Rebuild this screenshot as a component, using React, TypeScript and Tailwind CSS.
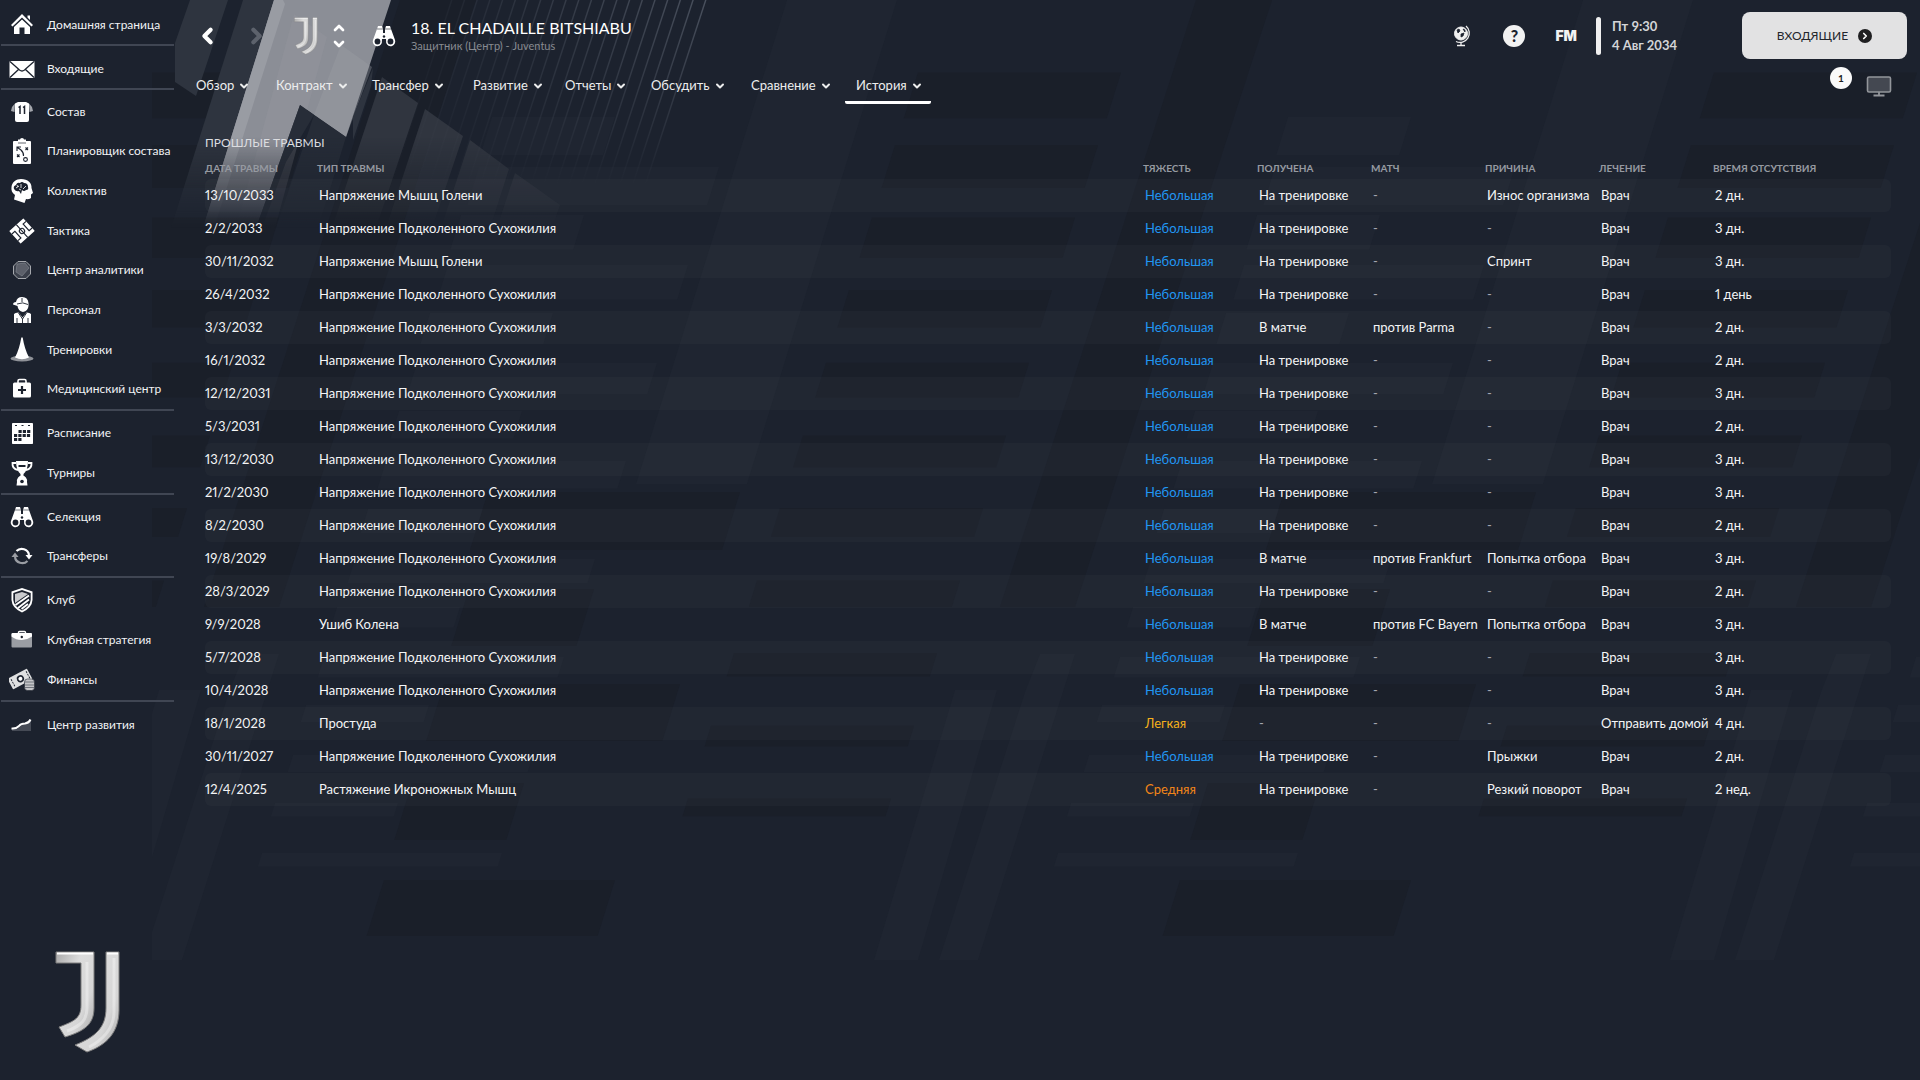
import type { ReactNode } from 'react'
import { ChevronDown, ChevronLeft, ChevronRight, ChevronUp } from 'lucide-react'

/** Club crest, used in the header and at the foot of the sidebar */
function ClubCrest({ id, className }: { id: string; className: string }) {
  return (
    <svg viewBox="0 0 66 104" className={className} aria-label="Juventus" role="img">
      <defs>
        <linearGradient id={id} x1="0" y1="0" x2="1" y2="1">
          <stop offset="0" stopColor="#a9a9a9" />
          <stop offset="0.35" stopColor="#dcdcdc" />
          <stop offset="0.7" stopColor="#d6d6d6" />
          <stop offset="1" stopColor="#a8a8a8" />
        </linearGradient>
      </defs>
      <g fill={`url(#${id})`} stroke="#7d7d7d" strokeWidth="1">
        <path d="M1 2H39V58C39 74 30 81 10 87L4 77C20 71 26 68 26 55V13H1Z" />
        <path d="M51 2H64V60C64 82 52 95 32 102L20 95C40 87 51 78 51 58Z" />
      </g>
      <path d="M2 3.5H38M52 3.5H63" stroke="#fff" strokeWidth="2" />
      <path d="M32 12V58C32 70 26 76 12 81M59 8V62C59 78 48 90 34 97" fill="none" stroke="#fff" strokeOpacity="0.35" strokeWidth="3" />
    </svg>
  )
}

function Svg({ children }: { children: ReactNode }) {
  return (
    <svg viewBox="0 0 26 26" className="size-[26px] shrink-0" fill="#fff" aria-hidden="true">
      {children}
    </svg>
  )
}

function Binoculars() {
  return (
    <>
      <path d="M7 3H11L12 6V10H14V6L15 3H19L20 6L24 17A4.6 4.6 0 1 1 15.2 20L15 16H11L10.8 20A4.6 4.6 0 1 1 2 17L6 6Z" />
      <circle cx="6.5" cy="18.5" r="2.9" fill="#1c222e" />
      <circle cx="19.5" cy="18.5" r="2.9" fill="#1c222e" />
      <circle cx="13" cy="13.5" r="1.2" fill="#1c222e" />
      <path d="M6 6H12M14 6H20" stroke="#1c222e" strokeWidth="0.6" />
    </>
  )
}

const icons: Record<string, ReactNode> = {
  home: <path d="M13 2L24 13L22.5 14.5L13 5.5L3.500 14.5L2 13ZM18.500 3.5H21V8L18.5 5.5ZM13 7.5L21 15V22H15.500V15.5H10.5V22H5V15Z" />,
  mail: (
    <>
      <rect x="0.5" y="5" width="25" height="17" rx="1" />
      <path d="M1 5.5L10.5 14Q13 16 15.5 14L25 5.5M1 21.5L9.5 13.5M25 21.5L16.5 13.5" fill="none" stroke="#1c222e" strokeWidth="1.3" />
    </>
  ),
  shirt: (
    <>
      <path d="M9 3H17L20 4.5V21Q20 23 18 23H8Q6 23 6 21V4.5Z" />
      <path d="M6 4.5L3 8L2 12L5.5 13ZM20 4.5L23 8L24 12L20.5 13Z" fill="#a3a6ac" />
      <path d="M9.5 8.5L11 7.5V15M14 8.5L15.5 7.5V15" fill="none" stroke="#1c222e" strokeWidth="1.5" />
    </>
  ),
  planner: (
    <>
      <path d="M5 3H9V1.5H11Q11 0 13 0Q15 0 15 1.5H17V3H21Q22 3 22 4V25Q22 26 21 26H5Q4 26 4 25V4Q4 3 5 3Z" />
      <path d="M9 5H17" stroke="#1c222e" strokeWidth="0.7" />
      <path d="M12 9H8V13M8.5 9.5L12 12Q15 15 14.5 18M16.500 9.5L19 12M19 9.5L16.5 12M8 16.5L10.5 19M10.5 16.5L8 19" fill="none" stroke="#1c222e" strokeWidth="1.1" />
      <circle cx="16.5" cy="21.500" r="1.9" fill="none" stroke="#1c222e" strokeWidth="1.1" />
    </>
  ),
  brain: (
    <>
      <path d="M12 1C19 1 23 5 22.5 10L24 15L22 16.5V20Q21 21.5 17 21L15.5 25L5 21.5L6 17C3 15 2 12 2.5 9C3 4 7 1 12 1Z" />
      <path d="M5 11Q4 8 7 7Q8 4 11 5Q13 3 15 5Q19 5 19 9Q20 12 17 12Q15 14 13 12L12 16L10 13Q7 14 5 11Z" fill="#1c222e" />
      <path d="M7 10L10 8M12 6V10M14 11L17 8M8 7L9 9M10 11L12 12" stroke="#fff" strokeWidth="0.8" />
    </>
  ),
  tactics: (
    <g transform="rotate(-42 13 13)">
      <rect x="3.5" y="4.5" width="19" height="17" rx="0.5" />
      <path d="M13 4.5V21.5M3.5 8.5H7.500V17.5H3.5M22.5 8.5H18.5V17.5H22.5" fill="none" stroke="#1c222e" strokeWidth="1.1" />
      <circle cx="13" cy="13" r="2.6" fill="none" stroke="#1c222e" strokeWidth="1.1" />
    </g>
  ),
  data: (
    <>
      <path d="M9 4.5H17L21.5 9V17L17 21.5H9L4.5 17V9Z" fill="#3b404b" stroke="#a5a8ad" strokeWidth="1" />
      <path d="M8 7L16 6L20 11L13 19L7 15Z" fill="#5c606a" stroke="#858992" strokeWidth="0.6" />
    </>
  ),
  staff: (
    <>
      <path d="M7 5Q8 0 13 0Q19 0 19.5 6V9Q19 14 14 15Q9 14 8.5 9L4 7.500Q4 5 7 5Z" />
      <path d="M8 7Q14 4.5 19 7.5M13 1V5" fill="none" stroke="#1c222e" strokeWidth="0.9" />
      <path d="M5 26V17Q6 15.5 9.5 15.5L13.5 20.5L17.5 15.5Q21 15.5 22 17V26Z" />
      <path d="M9.5 16L13.5 22L17.5 16M13.5 22V26M8 21V26M19 21V26" fill="none" stroke="#1c222e" strokeWidth="0.9" />
    </>
  ),
  cone: (
    <>
      <ellipse cx="13" cy="21.5" rx="11.5" ry="3" fill="#8f9298" />
      <path d="M12.3 0.5H13.700Q15.5 12 20 20.5Q13 24 6 20.5Q10.5 12 12.3 0.5Z" />
    </>
  ),
  medical: (
    <>
      <path d="M9 7V5Q9 3.5 10.5 3.5H15.5Q17 3.5 17 5V7" fill="none" stroke="#fff" strokeWidth="1.6" />
      <rect x="4" y="6.500" width="18" height="15" rx="1.5" />
      <path d="M13 10V18M9 14H17" stroke="#1c222e" strokeWidth="2.2" />
    </>
  ),
  calendar: (
    <>
      <rect x="3" y="3" width="21" height="21" rx="0.8" />
      <path d="M6 5.5H8M12.5 5.5H14.5M19 5.5H21" stroke="#1c222e" strokeWidth="1.2" />
      <path d="M9.5 11.5H22M5 15.5H22M5 19.5H13.5" stroke="#1c222e" strokeWidth="2.8" strokeDasharray="3.2 1.1" />
    </>
  ),
  trophy: (
    <>
      <path d="M7 1H19Q19 10 14.5 14V16H11.5V14Q7 10 7 1Z" />
      <path d="M7 3H3.500Q3 9 9 10M19 3H22.500Q23 9 17 10" fill="none" stroke="#fff" strokeWidth="1.8" />
      <path d="M9.5 6H16.5" stroke="#1c222e" strokeWidth="2" />
      <path d="M13 15.5A5 5.5 0 0 1 18 22L18.500 25.5H7.5L8 22A5 5.5 0 0 1 13 15.500Z" />
      <circle cx="13" cy="21.5" r="1.8" fill="#1c222e" />
    </>
  ),
  binoculars: <Binoculars />,
  transfers: (
    <>
      <path d="M7.500 8A7.300 7 0 0 1 20 12" fill="none" stroke="#fff" strokeWidth="2.2" />
      <path d="M16.500 12H23.500L20 16.5Z" />
      <path d="M18.500 18A7.300 7 0 0 1 6 14" fill="none" stroke="#9a9da3" strokeWidth="2.2" />
      <path d="M9.500 14H2.5L6 9.5Z" fill="#9a9da3" />
    </>
  ),
  shield: (
    <>
      <path d="M13 1L23.5 4.5V13Q23 21 13 25.5Q3 21 2.5 13V4.5Z" />
      <path d="M13 3L21.7 6V13Q21 19.5 13 23.5Q5 19.5 4.3 13V6Z" fill="#1c222e" />
      <path d="M6 7L13 5L19 7L6 16Z" fill="#c9cacd" />
      <path d="M6.5 18L20 8.5M9 21L20 12.500M12.5 22L19 17" stroke="#fff" strokeWidth="1.8" />
    </>
  ),
  briefcase: (
    <>
      <path d="M9.500 7V5.500Q9.5 4.5 10.5 4.5H15.500Q16.5 4.5 16.5 5.5V7" fill="none" stroke="#fff" strokeWidth="1.4" />
      <rect x="2.5" y="6" width="20.5" height="14.500" rx="1" fill="#9a9da3" />
      <path d="M3.5 6H22Q23 6 23 7.500V9.5Q18 13 12.8 13Q7 13 2.5 9.500V7.5Q2.5 6 3.5 6Z" />
      <circle cx="12.8" cy="10" r="1.2" fill="#1c222e" />
    </>
  ),
  finances: (
    <>
      <g transform="rotate(-28 11 12)">
        <rect x="0" y="6" width="22" height="12" rx="1" fill="#dfe0e1" />
        <circle cx="11.5" cy="12" r="3.6" fill="#1c222e" />
        <circle cx="11.5" cy="12" r="2" />
        <path d="M3 8V16M20 8V16" stroke="#1c222e" strokeWidth="0.9" strokeDasharray="2 1" />
      </g>
      <rect x="15.500" y="12" width="10" height="11.500" rx="3" fill="#c4c5c8" stroke="#1c222e" strokeWidth="0.6" />
      <path d="M16 15H25M16 18H25M16 20.5H25" stroke="#5b5f68" strokeWidth="0.8" />
    </>
  ),
  growth: (
    <>
      <path d="M3 17L8 17L13 13L19 11L22 8V19H3Z" fill="#454a55" />
      <path d="M2.500 16.5Q7 17 10 14Q12 11.5 16 11.5Q20 11 21.5 7.5" fill="none" stroke="#fff" strokeWidth="2" />
    </>
  ),
}

interface MenuGroup {
  className: string
  items: { label: string; icon: string }[]
}

const menu: MenuGroup[] = [
  { className: 'h-[46px] pt-1.5', items: [{ label: 'Домашняя страница', icon: 'home' }] },
  { className: 'h-11 pt-1', items: [{ label: 'Входящие', icon: 'mail' }] },
  {
    className: 'h-[321px] pt-0.5',
    items: [
      { label: 'Состав', icon: 'shirt' },
      { label: 'Планировщик состава', icon: 'planner' },
      { label: 'Коллектив', icon: 'brain' },
      { label: 'Тактика', icon: 'tactics' },
      { label: 'Центр аналитики', icon: 'data' },
      { label: 'Персонал', icon: 'staff' },
      { label: 'Тренировки', icon: 'cone' },
      { label: 'Медицинский центр', icon: 'medical' },
    ],
  },
  {
    className: 'h-[84px] pt-0.5',
    items: [
      { label: 'Расписание', icon: 'calendar' },
      { label: 'Турниры', icon: 'trophy' },
    ],
  },
  {
    className: 'h-[83px] pt-0.5',
    items: [
      { label: 'Селекция', icon: 'binoculars' },
      { label: 'Трансферы', icon: 'transfers' },
    ],
  },
  {
    className: 'h-[124px] pt-0.5',
    items: [
      { label: 'Клуб', icon: 'shield' },
      { label: 'Клубная стратегия', icon: 'briefcase' },
      { label: 'Финансы', icon: 'finances' },
    ],
  },
  { className: 'h-11 pt-1', items: [{ label: 'Центр развития', icon: 'growth' }] },
]

const tabs = [
  { label: 'Обзор', width: 'w-20' },
  { label: 'Контракт', width: 'w-24' },
  { label: 'Трансфер', width: 'w-[101px]' },
  { label: 'Развитие', width: 'w-[92px]' },
  { label: 'Отчеты', width: 'w-[86px]' },
  { label: 'Обсудить', width: 'w-[100px]' },
  { label: 'Сравнение', width: 'w-[105px]' },
  { label: 'История', width: 'w-[86px]' },
]

const columns = [
  { title: 'Дата травмы', width: 'w-28' },
  { title: 'Тип травмы', width: '' },
  { title: 'Тяжесть', width: 'w-[114px]' },
  { title: 'Получена', width: 'w-[114px]' },
  { title: 'Матч', width: 'w-[114px]' },
  { title: 'Причина', width: 'w-[114px]' },
  { title: 'Лечение', width: 'w-[114px]' },
  { title: 'Время отсутствия', width: 'w-[178px]' },
]

const HAMSTRING = 'Напряжение Подколенного Сухожилия'
const CALF = 'Напряжение Мышц Голени'
const TRAINING = 'На тренировке'

// date, injury, severity, where, match, cause, treatment, time out
const injuries: string[][] = [
  ['13/10/2033', CALF, 'Небольшая', TRAINING, '-', 'Износ организма', 'Врач', '2 дн.'],
  ['2/2/2033', HAMSTRING, 'Небольшая', TRAINING, '-', '-', 'Врач', '3 дн.'],
  ['30/11/2032', CALF, 'Небольшая', TRAINING, '-', 'Спринт', 'Врач', '3 дн.'],
  ['26/4/2032', HAMSTRING, 'Небольшая', TRAINING, '-', '-', 'Врач', '1 день'],
  ['3/3/2032', HAMSTRING, 'Небольшая', 'В матче', 'против Parma', '-', 'Врач', '2 дн.'],
  ['16/1/2032', HAMSTRING, 'Небольшая', TRAINING, '-', '-', 'Врач', '2 дн.'],
  ['12/12/2031', HAMSTRING, 'Небольшая', TRAINING, '-', '-', 'Врач', '3 дн.'],
  ['5/3/2031', HAMSTRING, 'Небольшая', TRAINING, '-', '-', 'Врач', '2 дн.'],
  ['13/12/2030', HAMSTRING, 'Небольшая', TRAINING, '-', '-', 'Врач', '3 дн.'],
  ['21/2/2030', HAMSTRING, 'Небольшая', TRAINING, '-', '-', 'Врач', '3 дн.'],
  ['8/2/2030', HAMSTRING, 'Небольшая', TRAINING, '-', '-', 'Врач', '2 дн.'],
  ['19/8/2029', HAMSTRING, 'Небольшая', 'В матче', 'против Frankfurt', 'Попытка отбора', 'Врач', '3 дн.'],
  ['28/3/2029', HAMSTRING, 'Небольшая', TRAINING, '-', '-', 'Врач', '2 дн.'],
  ['9/9/2028', 'Ушиб Колена', 'Небольшая', 'В матче', 'против FC Bayern', 'Попытка отбора', 'Врач', '3 дн.'],
  ['5/7/2028', HAMSTRING, 'Небольшая', TRAINING, '-', '-', 'Врач', '3 дн.'],
  ['10/4/2028', HAMSTRING, 'Небольшая', TRAINING, '-', '-', 'Врач', '3 дн.'],
  ['18/1/2028', 'Простуда', 'Легкая', '-', '-', '-', 'Отправить домой', '4 дн.'],
  ['30/11/2027', HAMSTRING, 'Небольшая', TRAINING, '-', 'Прыжки', 'Врач', '2 дн.'],
  ['12/4/2025', 'Растяжение Икроножных Мышц', 'Средняя', TRAINING, '-', 'Резкий поворот', 'Врач', '2 нед.'],
]

const severityColors: Record<string, string> = {
  'Небольшая': 'text-[#2196f3]',
  'Легкая': 'text-[#f5b01c]',
  'Средняя': 'text-[#f28518]',
}

/** Parallelogram leaning with the rest of the pattern */
function slanted(left: number, right: number, top: number, height: number) {
  const lean = height * 0.31
  return `M${left} ${top}H${right}L${right - lean} ${top + height}H${left - lean}Z`
}

/** Slanted club pattern behind the whole screen */
function Backdrop() {
  return (
    <svg className="absolute inset-0 size-full" viewBox="0 0 1920 1080" preserveAspectRatio="xMinYMin slice" aria-hidden="true">
      <defs>
        <linearGradient id="fade" gradientUnits="userSpaceOnUse" x1="0" y1="0" x2="0" y2="228">
          <stop offset="0" stopColor="#fff" />
          <stop offset="0.6" stopColor="#fff" />
          <stop offset="1" stopColor="#000" />
        </linearGradient>
        <mask id="fade-mask" maskUnits="userSpaceOnUse" x="0" y="0" width="1920" height="1080">
          <rect width="1920" height="228" fill="url(#fade)" />
        </mask>
        <linearGradient id="lines" gradientUnits="userSpaceOnUse" x1="0" y1="0" x2="0" y2="185">
          <stop offset="0" stopColor="#4a515e" />
          <stop offset="1" stopColor="#4a515e" stopOpacity="0" />
        </linearGradient>
      </defs>

      {/* Pattern repeats every 796px */}
      {[-796, 0, 796].map((shift) => (
        <g key={shift} transform={`translate(${shift} 0)`}>
          <path d="M787 0H897L747 484H636Z" fill="#1f2531" />
          <path d="M955 690H997L918 960H874ZM1025 692L1040 654H1075L978 960H939Z" fill="#1f2531" />
          {[0, 1, 2, 3, 4, 5, 6, 7].map((i) => (
            <path
              key={i}
              d={slanted(1275 - 31 * i, 1515 - 31 * i, 167 + 98 * i, 38 - 3.5 * i) + slanted(1288 - 31 * i, 1411 - 31 * i, 117 + 98 * i, 38 - 3.5 * i)}
              fill="#1f2531"
            />
          ))}
          <g fill="#1a1f29">
            <path d="M1196 0H1272L1075 607H1000Z" />
            {[-1, 0, 1, 2, 3, 4, 5, 6, 7, 8, 9].map((i) => (
              <path key={i} d={slanted(895 - 23 * i, 1098 - 23 * i, 145 + 72.6 * i, 43 - 2.8 * i)} />
            ))}
            <path d={slanted(488, 740, 492, 58)} />
            <path d={slanted(469, 594, 589, 57)} />
            <path d={slanted(444, 680, 684, 57)} />
            <path d={slanted(412, 524, 783, 57)} />
            <path d={slanted(384, 615, 880, 56)} />
          </g>
        </g>
      ))}

      {/* Sidebar stays flat over the pattern */}
      <rect width="152" height="1080" fill="#1c222e" />

      <g mask="url(#fade-mask)">
        <path d="M190 0H228L196 96L175 82V43Z" fill="#2e343f" />
        <path d="M243 0H275L203 228H171Z" fill="#2e343f" />
        <path d="M274 0H391L346 137L300 105L256 228H203Z" fill="#8b8e96" />
        <path d="M274 0H283L285 4L214 228H203Z" fill="#999ca3" />
        <path d="M294 14L327 37L275 228H236Z" fill="#9a9da5" fillOpacity="0.25" />
        <path d="M341 45L372 67L346 137L314 115Z" fill="#9da0a7" fillOpacity="0.35" />
        <path d="M300 105L314 115L286 162L262 228H256Z" fill="#272d38" />
        <path d="M314 115L346 137L318 228H276Z" fill="#262c37" />
        <path d="M353 117L373 68L371 86L353 140Z" fill="#2e343f" />
        <path d="M382 77L418 103L376 228H332Z" fill="#30353f" />
        <path d="M425 109L463 136L432 228H386Z" fill="#30353f" />
        <path d="M470 140L509 169L490 228H441Z" fill="#30353f" />
        <path d="M515 173L560 205L552 228H497Z" fill="#30353f" />
      </g>

      {/* Pinstripes get brighter to the right */}
      {Array.from({ length: 21 }, (_, i) => (
        <path
          key={i}
          d={`M${451 + i * 12.7} 0h1.5L${392 + i * 12.7} 185h-1.5Z`}
          fill="url(#lines)"
          opacity={0.15 + i * 0.042}
        />
      ))}
    </svg>
  )
}

function Sidebar() {
  return (
    <nav className="flex w-[175px] shrink-0 flex-col pr-px pl-px">
      {menu.map((group, index) => (
        <div
          key={group.items[0].label}
          className={`flex flex-col border-b-2 ${group.className} ${index < menu.length - 1 ? 'border-[#404653]' : 'border-transparent'}`}
        >
          {group.items.map((item) => (
            <a key={item.label} href="#" className="flex flex-1 items-center gap-3 pl-2 text-xs text-[#f2f3f5]">
              <Svg>{icons[item.icon]}</Svg>
              <span className="whitespace-nowrap">{item.label}</span>
            </a>
          ))}
        </div>
      ))}
      <div className="mt-auto flex pb-[26px] pl-[54px]">
        <ClubCrest id="crest-large" className="h-[104px] w-[66px] shrink-0" />
      </div>
    </nav>
  )
}

function Header() {
  return (
    <header className="flex h-[71px] items-center pr-[13px] pl-5">
      <button aria-label="Назад" className="flex w-[25px] justify-center">
        <ChevronLeft size={30} strokeWidth={4} />
      </button>
      <button aria-label="Вперед" className="ml-6 flex w-[25px] justify-center text-[#5d626c]">
        <ChevronRight size={28} strokeWidth={4} />
      </button>
      <ClubCrest id="crest-small" className="ml-6 h-[38px] w-[26px]" />
      <div className="ml-3 flex flex-col">
        <button aria-label="Предыдущий игрок"><ChevronUp size={16} strokeWidth={4} /></button>
        <button aria-label="Следующий игрок"><ChevronDown size={16} strokeWidth={4} /></button>
      </div>
      <div className="ml-6">
        <Svg><Binoculars /></Svg>
      </div>
      <div className="ml-3.5 pt-px">
        <h1 className="text-base leading-5">18. EL CHADAILLE BITSHIABU</h1>
        <p className="text-[11px] leading-4 text-[#888b91]">Защитник (Центр) - Juventus</p>
      </div>

      <div className="ml-auto flex items-center">
        <button aria-label="Мир">
          <svg viewBox="0 0 20 22" className="h-[22px] w-5" fill="none" stroke="#f0f0f0">
            <circle cx="9" cy="8.5" r="6.5" fill="#f0f0f0" />
            <path d="M14 1A9.3 9.3 0 0 1 4 16.5M9 17V20.5M5 20.5H13" strokeWidth="1.3" />
            <path d="M5 5L7 4L8 6L6 8ZM9 9L12 8L11 11L9 12ZM11 4L13 5V7Z" fill="#1c222e" stroke="#1c222e" strokeWidth="0.8" />
          </svg>
        </button>
        <button aria-label="Помощь" className="ml-[31px] flex size-[22px] items-center justify-center rounded-full bg-[#f2f2f2] text-base font-black text-[#1c222e]">
          ?
        </button>
        <button className="ml-[30px] font-[Inter] text-sm font-black text-[#f2f2f2]">FM</button>
        <div className="ml-[19px] h-[38px] w-[5px] rounded-full bg-[#f0f0f0]" />
        <div className="ml-[11px] w-[78px] text-[13px] leading-[19px] font-bold whitespace-nowrap text-[#d3d4d7]">
          <p>Пт 9:30</p>
          <p>4 Авг 2034</p>
        </div>
        <button className="ml-13 flex h-[47px] w-[165px] items-center justify-center gap-2.5 rounded-lg bg-[#e2e2e3] text-xs text-[#23262c]">
          ВХОДЯЩИЕ
          <span className="flex size-[14px] items-center justify-center rounded-full bg-[#1f1f21] text-white">
            <ChevronRight size={10} strokeWidth={4} />
          </span>
        </button>
      </div>
    </header>
  )
}

function Tabs() {
  return (
    <div className="flex h-9 items-start justify-between pr-7 pl-2.5">
      <div className="flex">
        {tabs.map((tab) => (
          <button
            key={tab.label}
            className={`flex h-[33px] items-center gap-1 rounded-xs border-b-[3px] pl-[11px] text-[13px] text-[#eceded] ${tab.width} ${tab.label === 'История' ? 'border-white' : 'border-transparent'}`}
          >
            {tab.label}
            <ChevronDown size={12} strokeWidth={4} />
          </button>
        ))}
      </div>
      <div className="flex gap-3.5">
        <span className="-mt-1 flex size-[22px] items-center justify-center rounded-full bg-[#fafafa] text-[10px] font-bold text-[#1c1c1c]">1</span>
        <button aria-label="Экран" className="pt-1">
          <svg viewBox="0 0 26 22" className="h-[22px] w-[26px]" fill="none" stroke="#93969b">
            <rect x="1.5" y="2" width="23" height="15" rx="1.5" fill="#444851" strokeWidth="1.6" />
            <path d="M13 17V20M7.5 20.5H18.5" strokeWidth="1.8" />
          </svg>
        </button>
      </div>
    </div>
  )
}

function InjuryTable() {
  return (
    <section className="mt-[26px] pr-[29px] pl-[30px]">
      <h2 className="text-xs leading-5 text-[#dcdde0]">ПРОШЛЫЕ ТРАВМЫ</h2>
      <table className="w-full table-fixed border-separate border-spacing-0 text-left whitespace-nowrap proportional-nums">
        <thead>
          <tr className="h-[26px] text-[10px] font-bold text-[#969aa1] uppercase">
            {columns.map((column) => (
              <th key={column.title} className={`p-0 pt-1 ${column.width}`}>{column.title}</th>
            ))}
          </tr>
        </thead>
        <tbody>
          {injuries.map((row, r) => (
            <tr key={row[0]} className="h-[33px] text-[13px]">
              {row.map((value, c) => (
                <td
                  key={c}
                  className={`p-0 first:rounded-l-md last:rounded-r-md ${r % 2 === 0 ? 'bg-white/[0.025]' : ''} ${c > 0 ? 'pl-0.5' : ''} ${c === 2 ? severityColors[value] : value === '-' ? 'text-[#a5a8ae]' : 'text-[#f4f5f6]'}`}
                >
                  {value}
                </td>
              ))}
            </tr>
          ))}
        </tbody>
      </table>
    </section>
  )
}

export default function App() {
  return (
    <div className="relative min-h-screen overflow-hidden bg-[#1c222e] font-[Lato,'Noto_Sans',sans-serif] text-white">
      <Backdrop />
      <div className="relative flex min-h-screen">
        <Sidebar />
        <main className="min-w-0 flex-1">
          <Header />
          <Tabs />
          <InjuryTable />
        </main>
      </div>
    </div>
  )
}
